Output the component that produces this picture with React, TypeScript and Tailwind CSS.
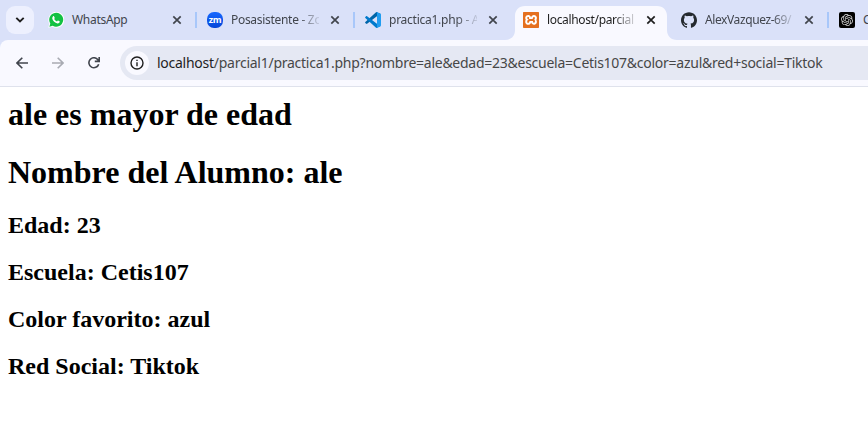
import type { ReactNode } from "react";
import { SiGithub, SiOpenai, SiXampp } from "react-icons/si";

function WhatsAppIcon() {
  return (
    <svg viewBox="0 0 16 16" className="-ml-px size-4 shrink-0">
      <path d="M.3 15.8 1.4 11.8A8 8 0 1 1 4.3 14.7Z" fill="#fff" />
      <path d="M1.4 14.7 2.3 11.5A7 7 0 1 1 4.7 13.8Z" fill="#12c143" />
      <path
        d="M5.1 4.3c.3-.3.8-.3 1 .1l.6 1.4c.1.3 0 .5-.5 1.1.7 1.3 1.5 2 2.8 2.5.6-.7.8-1 1.1-.8l1.4.7c.3.2.3.3.2.7-.2 1-1.2 1.5-2.1 1.4-2.6-.4-4.9-2.7-5.3-4.7-.1-.9.3-1.9.8-2.4Z"
        fill="#fff"
      />
    </svg>
  );
}

function ZoomIcon() {
  return (
    <span className="flex size-4 shrink-0 items-center justify-center rounded-[7px] bg-linear-to-b from-[#1768ff] to-[#0646d8] pb-[2px] font-['Open_Sans',sans-serif] text-[9px] leading-none font-bold tracking-[-0.3px] text-white">
      zm
    </span>
  );
}

function CodeIcon() {
  return (
    <svg viewBox="0 0 100 100" className="size-4 shrink-0">
      <path d="M96 11 76 1c-2-1-5-.7-7 1L2 63c-2 2-2 4 0 6l5 5c2 1 4 1 6 0L93 13c3-2 7 0 7 4 0-3-1-5-4-6Z" fill="#0065a9" />
      <path d="m96 89-20 10c-2 1-5 .7-7-1L2 37c-2-2-2-4 0-6l5-5c2-1 4-1 6 0l80 61c3 2 7 0 7-4 0 3-1 5-4 6Z" fill="#007acc" />
      <path d="M76 99c-3 1-5 .6-7-1 2 2 6 .6 6-3V5c0-3-4-5-6-3 2-2 4-2 7-1l20 10c3 1 4 3 4 6v66c0 3-1 5-4 6Z" fill="#1f9cf0" />
    </svg>
  );
}

function XamppIcon() {
  return (
    <span className="flex size-4 shrink-0 rounded-[1px] bg-[#e5701f] bg-[linear-gradient(#fff,#fff)] bg-[length:12px_12px] bg-center bg-no-repeat">
      <SiXampp className="size-4 text-[#e5701f]" />
    </span>
  );
}

function OpenAiIcon() {
  return (
    <span className="flex size-4 shrink-0 items-center justify-center rounded-[2px] bg-black">
      <SiOpenai className="size-3 text-[#d5d5d5]" />
    </span>
  );
}

function Close({ active }: { active?: boolean }) {
  return (
    <svg
      viewBox="0 0 10 10"
      className={"ml-[11px] size-[10px] shrink-0 " + (active ? "text-[#1f1f1f]" : "text-[#41454d]")}
      stroke="currentColor"
      strokeWidth="1.7"
    >
      <path d="m1.3 1.3 7.4 7.4M8.7 1.3 1.3 8.7" />
    </svg>
  );
}

type TabProps = {
  icon: ReactNode;
  title: string;
  tracking: string;
  active?: boolean;
  divider?: boolean;
  fade?: boolean;
};

function Tab({ icon, title, tracking, active, divider, fade }: TabProps) {
  return (
    <div className="relative flex h-10 w-[158px] shrink-0 items-center">
      {active && (
        <svg viewBox="0 0 172 34" className="absolute top-[6px] -left-[18px] h-[34px] w-[172px] max-w-none">
          <path
            d="M0 34c6 0 10-4 10-10V10C10 4 14 0 20 0h132c6 0 10 4 10 10v14c0 6 4 10 10 10Z"
            fill="#f9f9ff"
          />
        </svg>
      )}
      <div className="relative flex items-center">
        {icon}
        <span
          className={
            "ml-2 w-[88px] shrink-0 text-xs leading-5 whitespace-nowrap " +
            tracking +
            (active ? " text-[#1f1f1f]" : " text-[#41454d]") +
            (fade ? " [mask-image:linear-gradient(to_right,#000_76%,transparent_104%)]" : "")
          }
        >
          {title}
        </span>
        <Close active={active} />
        {divider && <span className="ml-[13px] h-4 w-[2px] bg-[#a8c7fa]" />}
      </div>
    </div>
  );
}

export default function App() {
  return (
    <div className="h-[448px] w-[868px] overflow-hidden bg-white font-['Noto_Sans',sans-serif]">
      <div className="flex h-10 overflow-hidden bg-[#dae1f9]">
        <button className="mt-[6px] mr-[15px] ml-[6px] flex size-7 shrink-0 items-center justify-center rounded-[9px] bg-[#edf0fe]">
          <svg viewBox="0 0 10 6" className="h-[6px] w-[10px]" fill="none" stroke="#1f1f1f" strokeWidth="1.9">
            <path d="m1.3.8 3.7 3.7L8.7.8" />
          </svg>
        </button>
        <Tab icon={<span className="mr-px flex"><WhatsAppIcon /></span>} title="WhatsApp" tracking="-indent-px tracking-[-0.3px]" divider />
        <Tab icon={<ZoomIcon />} title="Posasistente - Zo" tracking="tracking-[-0.3px]" divider fade />
        <Tab icon={<CodeIcon />} title="practica1.php - A" tracking="tracking-[-0.25px]" fade />
        <Tab icon={<XamppIcon />} title="localhost/parcial" tracking="tracking-[-0.35px]" active fade />
        <Tab icon={<SiGithub className="size-4 shrink-0 text-[#24292f]" />} title="AlexVazquez-69/" tracking="tracking-[-0.4px]" divider fade />
        <Tab icon={<OpenAiIcon />} title="C" tracking="tracking-[-0.2px]" />
      </div>
      <div className="bg-[#dae1f9]">
        <div className="flex h-[47px] items-center rounded-tl-[8px] border-b border-[#dfe2ec] bg-[#f9f9ff] pl-4">
          <svg viewBox="0 0 12 12" className="size-3 shrink-0" fill="none" stroke="#41454d" strokeWidth="1.6">
            <path d="M12 6H1.3M6.3.7 1 6l5.3 5.3" />
          </svg>
          <svg viewBox="0 0 12 12" className="ml-6 size-3 shrink-0" fill="none" stroke="#a9abb3" strokeWidth="1.6">
            <path d="M0 6h10.7M5.7.7 11 6l-5.3 5.3" />
          </svg>
          <svg viewBox="0 0 12 12" className="ml-6 size-3 shrink-0" fill="none" stroke="#41454d" strokeWidth="1.6">
            <path d="M10.7 7.2A5 5 0 1 1 9.9 2.7L11.2 4M11.2 0v4.4H6.8" />
          </svg>
          <div className="ml-5 flex h-[34px] flex-1 items-center rounded-l-full bg-[#e5e8f3] pl-[5px]">
            <span className="flex size-6 shrink-0 items-center justify-center rounded-full bg-[#f9f9ff]">
              <svg viewBox="0 0 14 14" className="size-[14px]" fill="none" stroke="#1f1f1f" strokeWidth="1.4">
                <circle cx="7" cy="7" r="6" />
                <path d="M7 6.2v4M7 3.7v1.4" />
              </svg>
            </span>
            <span className="ml-2 text-sm leading-5 tracking-[-0.26px] whitespace-nowrap text-[#474747]">
              <span className="text-[#1f1f1f]">localhost</span>
              /parcial1/practica1.php?nombre=ale&amp;edad=23&amp;escuela=Cetis107&amp;color=azul&amp;red+social=Tiktok
            </span>
          </div>
        </div>
      </div>
      <main className="px-2 pt-[9px] font-['Liberation_Serif',serif] font-bold text-black">
        <h1 className="text-[32px] leading-[37px]">ale es mayor de edad</h1>
        <h1 className="mt-[21px] text-[32px] leading-[37px]">Nombre del Alumno: ale</h1>
        <h2 className="mt-[21px] text-2xl leading-[27px]">Edad: 23</h2>
        <h2 className="mt-5 text-2xl leading-[27px]">Escuela: Cetis107</h2>
        <h2 className="mt-5 text-2xl leading-[27px]">Color favorito: azul</h2>
        <h2 className="mt-5 text-2xl leading-[27px]">Red Social: Tiktok</h2>
      </main>
    </div>
  );
}
